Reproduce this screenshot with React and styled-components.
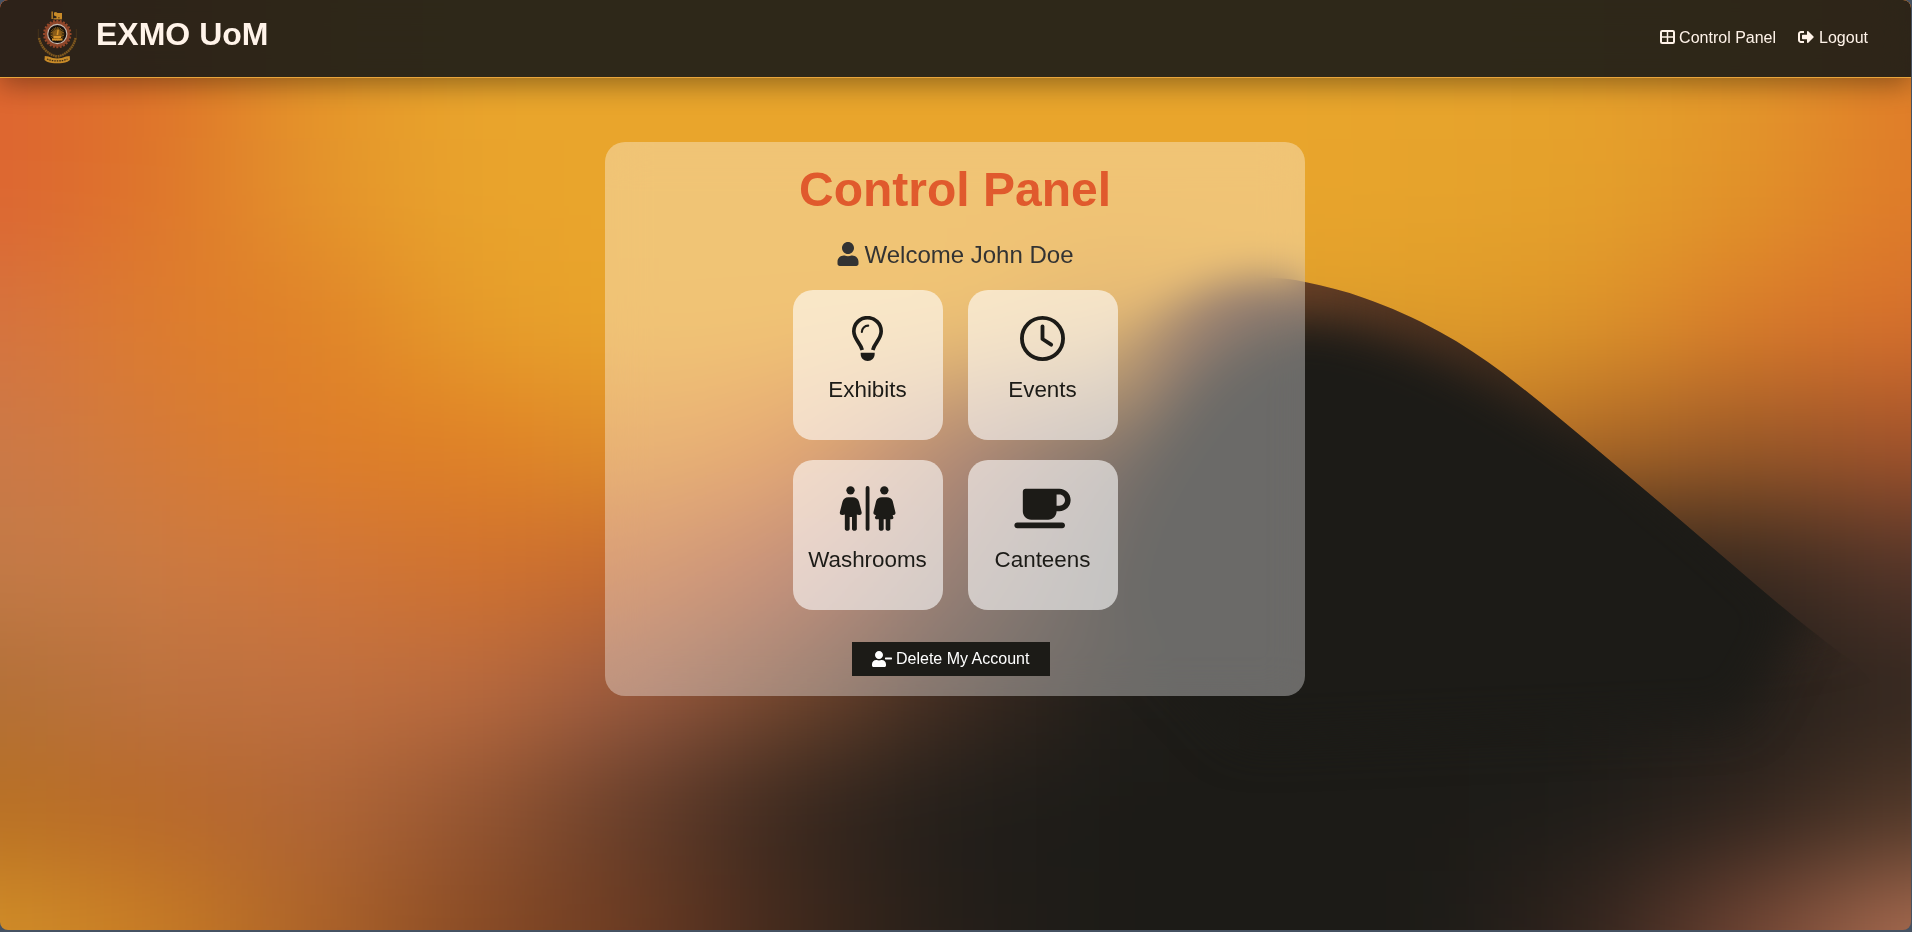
import React from "react";
import styled, { createGlobalStyle } from "styled-components";
import { FaUser, FaUserMinus, FaSignOutAlt } from "react-icons/fa";
import { FaMugSaucer } from "react-icons/fa6";

const GlobalStyle = createGlobalStyle`
  * { box-sizing: border-box; }
  body {
    margin: 0;
    background: #465262;
    font-family: "Liberation Sans", Arial, sans-serif;
  }
`;

const Page = styled.div`
  position: relative;
  isolation: isolate;
  width: 1911px;
  height: 930px;
  overflow: hidden;
  border-radius: 8px;
`;

const Wallpaper = styled.svg`
  position: absolute;
  inset: 0;
  z-index: -1;
  width: 1912px;
  height: 932px;
`;

const Header = styled.header`
  display: flex;
  justify-content: space-between;
  height: 78px;
  padding: 0 43px 0 36px;
  color: #fff3e9;
  background: rgba(28, 27, 23, 0.91);
  border-bottom: 1px solid #e9a53c;
  box-shadow: 0 6px 28px rgba(0, 0, 0, 0.38);
  backdrop-filter: blur(20px);
`;

const Brand = styled.div`
  display: flex;
  gap: 18px;
  padding-top: 10px;
`;

const BrandName = styled.h1`
  margin: 6px 0 0;
  font-size: 32px;
  line-height: 36px;
`;

const Nav = styled.nav`
  display: flex;
  gap: 22px;
  padding-top: 29px;
`;

const NavLink = styled.a`
  display: flex;
  align-items: flex-start;
  gap: ${(p) => p.$gap}px;
  font-size: 16px;
  line-height: 18px;
`;

const Panel = styled.main`
  display: flex;
  flex-direction: column;
  align-items: center;
  width: 700px;
  height: 554px;
  margin: 64px 0 0 605px;
  padding-top: 20px;
  border-radius: 20px;
  background: rgba(255, 255, 255, 0.35);
  backdrop-filter: blur(20px);
`;

const Title = styled.h2`
  margin: 0;
  font-size: 48px;
  line-height: 56px;
  color: #e05a2d;
`;

const Welcome = styled.p`
  display: flex;
  align-items: center;
  gap: 5px;
  margin: 22px 0 20px;
  padding-right: 1px;
  font-size: 24px;
  line-height: 30px;
  color: #333;
  svg { margin-top: -2px; }
`;

const Tiles = styled.div`
  display: grid;
  grid-template-columns: 150px 150px;
  gap: 20px 25px;
`;

const Tile = styled.a`
  display: flex;
  flex-direction: column;
  align-items: center;
  height: 150px;
  padding-top: 26px;
  border-radius: 20px;
  font-size: 22.4px;
  line-height: 26px;
  color: #1c1b17;
  background: rgba(255, 255, 255, 0.6);
`;

const TileIcon = styled.span`
  display: flex;
  justify-content: center;
  height: 45px;
  margin-bottom: 16px;
  svg { width: 57px; height: 45px; }
`;

const DeleteButton = styled.button`
  display: flex;
  align-items: center;
  gap: 4px;
  width: 198px;
  height: 34px;
  margin: 32px 8px 0 0;
  padding: 0 20px;
  border: 0;
  font: 16px "Liberation Sans", Arial, sans-serif;
  white-space: nowrap;
  color: #fff;
  background: #1c1b17;
`;

const D = "#1c1b17";
const Y = "#e9a52c";

const MESH = [
  ["#de6430", "#de7429", "#e5962a", Y, Y, Y, Y, Y, Y, "#e7a42c", "#e6a12b", "#e3962a", "#df7c29"],
  ["#dd6632", "#de762b", "#e4942b", "#e9a42c", Y, Y, Y, Y, Y, "#e6a32c", "#e4a02b", "#e19129", "#df7a29"],
  ["#d57340", "#dd7c2e", "#e08328", "#e69d2a", Y, Y, Y, "#d8942c", "#e0a02c", "#df9c2a", "#dd942a", "#d97a2a", "#d66f2d"],
  ["#cb7948", "#d57a38", "#de7e29", "#e08226", "#df8f2a", "#dc7c2a", "#8c4a2e", "#3c281f", "#3a281c", "#c88028", "#b06a27", "#9c5a28", "#a4532c"],
  ["#c27a48", "#cb7a42", "#d0763a", "#d1722e", "#c66a2f", "#aa5637", "#5d3c2d", "#241f1a", D, D, "#33251c", "#38291f", "#56362a"],
  ["#b27038", "#bd7240", "#c07040", "#b96a3e", "#995a41", "#71462d", "#3c2a20", "#1f1d19", D, D, D, "#221e1a", "#352820"],
  ["#b87023", "#b8682a", "#b06637", "#945532", "#643d2a", "#37271e", "#211e1a", D, D, D, "#1f1d19", "#30241d", "#523828"],
  ["#d28f28", "#c87c24", "#ac6228", "#884a24", "#6a3a22", "#3f281c", "#241e19", D, D, D, "#33241d", "#744634", "#ac6e52"],
];

const STEP_X = 159.3;
const STEP_Y = 122;

/* Outermost cells reach past the page so the blur keeps its colour at the borders. */
function MeshCells() {
  const cells = [];
  for (let r = 0; r < MESH.length; r += 1) {
    for (let c = 0; c < 13; c += 1) {
      const x0 = c === 0 ? -300 : (c - 0.5) * STEP_X;
      const x1 = c === 12 ? 2250 : (c + 0.5) * STEP_X;
      const y0 = r === 0 ? -300 : 78 + (r - 0.5) * STEP_Y;
      const y1 = r === 7 ? 1250 : 78 + (r + 0.5) * STEP_Y;
      cells.push(
        <rect key={`${r}-${c}`} x={x0} y={y0} width={x1 - x0 + 1} height={y1 - y0 + 1} fill={MESH[r][c]} />
      );
    }
  }
  return cells;
}

const RIDGE = "C1140 290 1235 266 1305 282 C1325 286 1345 291 1364 298 C1390 307 1415 318 1440 332 C1462 344 1483 358 1503 373 C1532 395 1560 419 1588 442 L1672 513 L1756 585 C1790 614 1820 638 1854 663";

function Background() {
  return (
    <Wallpaper viewBox="0 0 1912 932" aria-hidden="true">
      <defs>
        <filter id="mesh" filterUnits="userSpaceOnUse" x="-250" y="-250" width="2412" height="1432" colorInterpolationFilters="sRGB">
          <feGaussianBlur stdDeviation="68 50" />
        </filter>
        <filter id="rim" filterUnits="userSpaceOnUse" x="800" y="50" width="1300" height="1000" colorInterpolationFilters="sRGB">
          <feGaussianBlur stdDeviation="28" />
        </filter>
        <filter id="core" filterUnits="userSpaceOnUse" x="800" y="50" width="1300" height="1000" colorInterpolationFilters="sRGB">
          <feGaussianBlur stdDeviation="23" />
        </filter>
        <linearGradient id="rimFill" gradientUnits="userSpaceOnUse" x1="1300" y1="0" x2="1680" y2="0">
          <stop offset="0" stopColor="#6b4126" />
          <stop offset="0.45" stopColor="#4a301f" />
          <stop offset="1" stopColor="#201d19" />
        </linearGradient>
        <clipPath id="hill">
          <path d={`M1000 430 ${RIDGE} L1912 720 L1912 932 L900 932 Z`} />
        </clipPath>
      </defs>
      <g filter="url(#mesh)"><MeshCells /></g>
      <g clipPath="url(#hill)">
        <path filter="url(#rim)" fill="url(#rimFill)" d="M1130 370 L1210 230 L1340 190 L1500 280 L1660 400 L1800 540 L1850 620 L1740 640 L1500 560 L1300 520 L1180 480 Z" />
        <path filter="url(#core)" fill={D} d="M1140 450 C1185 360 1245 316 1310 316 C1390 326 1460 360 1530 404 L1625 458 L1710 528 L1800 610 L1740 720 L1240 740 L1110 600 Z" />
      </g>
    </Wallpaper>
  );
}

const TEETH = Array.from({ length: 24 }, (_, i) => i * 15);

function Crest() {
  return (
    <svg width="42" height="56" viewBox="0 0 42 56" aria-hidden="true">
      <g fill="#c98b28">
        <path d="M15.500 1.500h1.300v7.500h-1.300zM18 2.500l2-.5 1.500 1h4.500v5.500l-1 .5h-1.300V7.500h-1.700V9h-1.500V6.500l-2.500-1z" />
        <path d="M17.500 8.200h8.500v1.200h-8.500z" />
      </g>
      <g fill="#98482a">
        {TEETH.map((a) => (
          <rect key={a} x="20.300" y="9.800" width="2" height="3" transform={`rotate(${a} 21.300 24)`} />
        ))}
      </g>
      <circle cx="21.300" cy="24" r="11.200" fill="none" stroke="#8e4529" strokeWidth="3" />
      <circle cx="21.300" cy="24" r="9.600" fill="#17110c" stroke="#c9bbb0" strokeWidth="1.100" />
      <g stroke="#9a6a1c" strokeWidth="0.800">
        {TEETH.map((a) => (
          <path key={a} d="M21.300 17v4" transform={`rotate(${a} 21.300 24)`} />
        ))}
      </g>
      <circle cx="21.300" cy="24" r="4.500" fill="#8a5c18" />
      <path d="M20.500 25l1-5.500 1.300.5-.6 5zM17.500 26h7.500v2h-7.500zM16 28.500h10.500v2H16z" fill="#d8942a" />
      <g fill="none" stroke="#80591f" strokeWidth="2.400" strokeDasharray="1.800 .5">
        <path d="M3 28c2 9 8.500 16.500 18 18.500" />
        <path d="M39.600 28c-2 9-8.500 16.500-18 18.500" />
      </g>
      <path d="M2.300 19v9M40.300 19v9" stroke="#4c371d" strokeWidth=".8" />
      <path d="M8.800 46l3.700.5c5.500 2.500 12 2.500 17.500 0l3.700-.5.3 4-2.500 1.700c-6 2-14.500 2-20.500 0L8.500 50z" fill="#c98b28" />
      <path d="M11 49c6.500 2.600 14 2.600 20.500 0" fill="none" stroke="#3d2b16" strokeWidth="1.300" strokeDasharray="1.500 1" />
    </svg>
  );
}

function GridIcon() {
  return (
    <svg width="15" height="16" viewBox="0 0 15 16" fill="none" stroke="currentColor" aria-hidden="true">
      <rect x="1" y="2" width="13" height="12" rx="1.200" strokeWidth="2" />
      <path d="M7.500 2v12M1 8h13" strokeWidth="1.500" />
    </svg>
  );
}

function BulbIcon() {
  return (
    <svg viewBox="0 0 101 135" fill="none" stroke="currentColor" aria-hidden="true">
      <path d="M34.500 102C30 81 9.500 70 9.500 46a41 41 0 0 1 82 0C91.500 70 71 81 66.500 102" strokeWidth="11" />
      <path d="M33.500 48c0-11 9-19 19-19" strokeWidth="6.500" strokeLinecap="round" />
      <path d="M30 110h42v4c0 12-9 21-21 21s-21-9-21-21z" fill="currentColor" stroke="none" />
    </svg>
  );
}

function ClockIcon() {
  return (
    <svg viewBox="0 0 135 135" fill="none" stroke="currentColor" strokeWidth="11.500" aria-hidden="true">
      <circle cx="67.500" cy="67.500" r="61.700" />
      <path d="M67.500 31v38l26 17" strokeLinecap="round" strokeLinejoin="round" />
    </svg>
  );
}

function RestroomIcon() {
  return (
    <svg viewBox="0 0 169 135" fill="currentColor" aria-hidden="true">
      <circle cx="33.500" cy="13" r="12.500" />
      <path d="M27 34h13c10 0 16 5 19 13l8 32c1 6-4 9.500-8.500 8l-6-1.500V129c0 7-14.500 7-14.500 0V93h-7v36c0 7-14.500 7-14.500 0V85.500l-6 1.500C5.500 88.500.5 85 1.500 79l8-32c3-8 8-13 17.500-13z" />
      <rect x="79" y="0" width="11.500" height="134.500" rx="5.700" />
      <circle cx="135" cy="13" r="12.500" />
      <path d="M128 34h14c9 0 15 4 18 11l8 33c2 6-3 10-8 9l2 7c1 3-1 6-4 6h-5v29c0 7-14 7-14 0v-29h-6v29c0 7-14.500 7-14.500 0v-29H112c-3 0-6-3-5-6l3-7c-5 1-9-3-7.500-9l8-33c3-7 8.500-11 17.500-11z" />
    </svg>
  );
}

const SECTIONS = [
  { label: "Exhibits", Icon: BulbIcon },
  { label: "Events", Icon: ClockIcon },
  { label: "Washrooms", Icon: RestroomIcon },
  { label: "Canteens", Icon: FaMugSaucer },
];

export default function App() {
  return (
    <>
      <GlobalStyle />
      <Page>
        <Background />
        <Header>
          <Brand>
            <Crest />
            <BrandName>EXMO UoM</BrandName>
          </Brand>
          <Nav>
            <NavLink $gap={4}><GridIcon />Control Panel</NavLink>
            <NavLink $gap={5}><FaSignOutAlt />Logout</NavLink>
          </Nav>
        </Header>
        <Panel>
          <Title>Control Panel</Title>
          <Welcome><FaUser />Welcome John Doe</Welcome>
          <Tiles>
            {SECTIONS.map(({ label, Icon }) => (
              <Tile key={label}><TileIcon><Icon /></TileIcon>{label}</Tile>
            ))}
          </Tiles>
          <DeleteButton><FaUserMinus size={20} />Delete My Account</DeleteButton>
        </Panel>
      </Page>
    </>
  );
}
